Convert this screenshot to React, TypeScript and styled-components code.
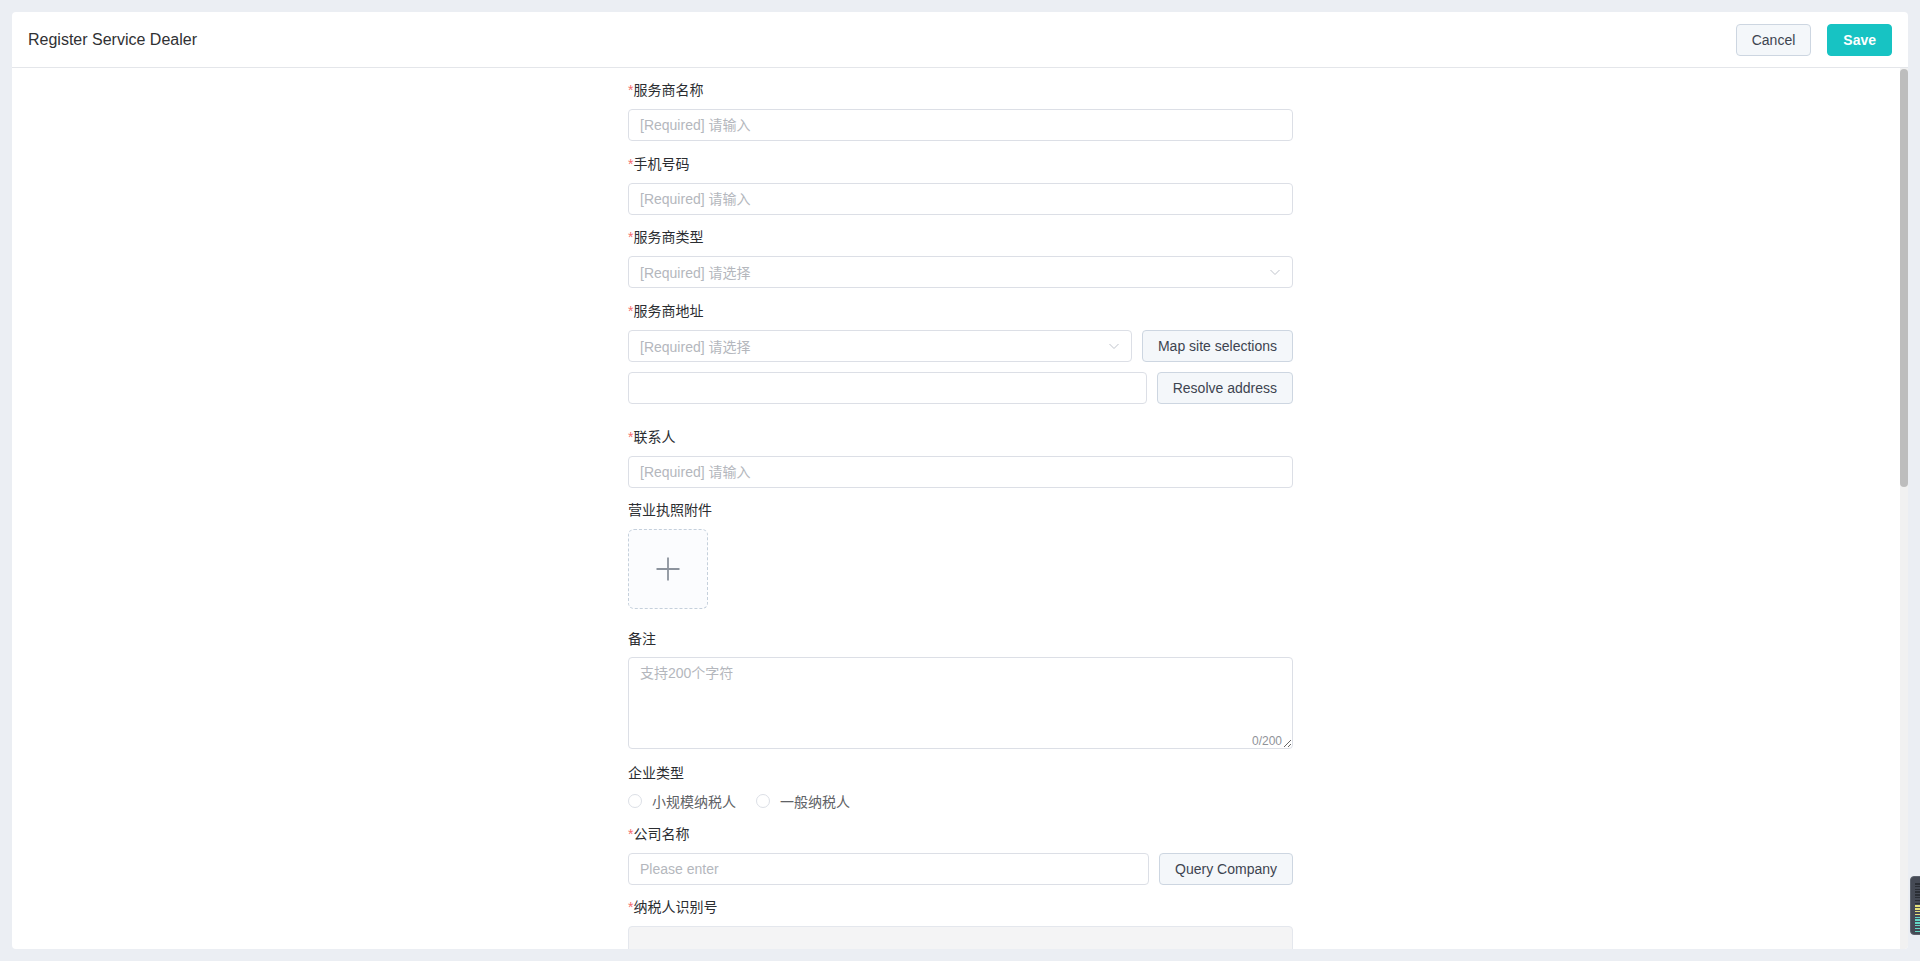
import React from "react";
import styled, { createGlobalStyle } from "styled-components";

const GlobalStyle = createGlobalStyle`
    html, body {
        margin: 0;
        padding: 0;
        background: #ebeef3;
        font-family: "Liberation Sans", Arial, "Noto Sans CJK SC", sans-serif;
        color: #303133;
    }
    * {
        box-sizing: border-box;
    }
`;

const Page = styled.div`
    height: 100vh;
    padding: 12px;
    display: flex;
`;

const Card = styled.div`
    flex: 1;
    min-width: 0;
    background: #fff;
    border-radius: 4px;
    display: flex;
    flex-direction: column;
    overflow: hidden;
`;

const Header = styled.div`
    height: 56px;
    flex-shrink: 0;
    padding: 0 16px;
    display: flex;
    align-items: center;
    justify-content: space-between;
    border-bottom: 1px solid #e4e6ea;
`;

const Title = styled.div`
    font-size: 16px;
    color: #303133;
`;

const Actions = styled.div`
    display: flex;
    gap: 16px;
`;

const Button = styled.button<{ $kind?: "primary" | "plain" }>`
    height: 32px;
    padding: 0 15px;
    border-radius: 4px;
    font-family: inherit;
    font-size: 14px;
    white-space: nowrap;
    flex-shrink: 0;
    cursor: pointer;
    border: 1px solid ${(p) => (p.$kind === "primary" ? "#17c3c3" : "#cdd6e1")};
    background: ${(p) => (p.$kind === "primary" ? "#17c3c3" : "#f4f7fa")};
    color: ${(p) => (p.$kind === "primary" ? "#fff" : "#3d4450")};
    font-weight: ${(p) => (p.$kind === "primary" ? 600 : 400)};
`;

const Body = styled.div`
    flex: 1;
    min-height: 0;
    display: flex;
`;

const Content = styled.div`
    flex: 1;
    min-width: 0;
    overflow: hidden;
    padding: 12px 0 0 9px;
`;

const ScrollTrack = styled.div`
    width: 8px;
    flex-shrink: 0;
    background: #f1f1f1;
    padding-top: 1px;
`;

const ScrollThumb = styled.div`
    height: 418px;
    border-radius: 4px;
    background: #bdbdbd;
`;

const Form = styled.div`
    width: 665px;
    margin: 0 auto;
`;

const Item = styled.div<{ $mb?: number }>`
    margin-bottom: ${(p) => (p.$mb ?? 12.5)}px;
`;

const Label = styled.div<{ $mb?: number }>`
    font-size: 14px;
    line-height: 20px;
    height: 20px;
    color: #2b2d31;
    margin-bottom: ${(p) => (p.$mb ?? 9)}px;
`;

const Star = styled.span`
    color: #f56c6c;
`;

const Input = styled.input`
    display: block;
    width: 100%;
    height: 32px;
    padding: 0 11px;
    border: 1px solid #dcdfe6;
    border-radius: 4px;
    background: #fff;
    font-family: inherit;
    font-size: 14px;
    color: #303133;
    outline: none;

    &::placeholder {
        color: #b4b7bd;
    }
    &:disabled {
        background: #f4f4f5;
        border-color: #e4e7ed;
    }
`;

const Select = styled.div`
    flex: 1;
    min-width: 0;
    height: 32px;
    padding: 0 11px;
    border: 1px solid #dcdfe6;
    border-radius: 4px;
    display: flex;
    align-items: center;
    justify-content: space-between;
    font-size: 14px;
    color: #b4b7bd;
`;

const Row = styled.div<{ $mt?: number }>`
    display: flex;
    gap: 10px;
    margin-top: ${(p) => p.$mt ?? 0}px;
`;

const Upload = styled.div`
    width: 80px;
    height: 80px;
    border: 1px dashed #c5d0dc;
    border-radius: 6px;
    background: #fbfcfe;
    display: flex;
    align-items: center;
    justify-content: center;
`;

const TextareaWrap = styled.div`
    position: relative;
`;

const Textarea = styled.textarea`
    display: block;
    width: 100%;
    height: 92px;
    padding: 5px 11px;
    border: 1px solid #dcdfe6;
    border-radius: 4px;
    resize: vertical;
    font-family: inherit;
    font-size: 14px;
    line-height: 20px;
    outline: none;

    &::placeholder {
        color: #b4b7bd;
    }
`;

const Count = styled.span`
    position: absolute;
    right: 11px;
    bottom: 1px;
    font-size: 12px;
    line-height: 14px;
    color: #909399;
    background: #fff;
`;

const RadioGroup = styled.div`
    display: flex;
    align-items: center;
    height: 20px;
    gap: 20px;
`;

const Radio = styled.label`
    display: flex;
    align-items: center;
    gap: 10px;
    font-size: 14px;
    color: #606266;
`;

const Dot = styled.span`
    width: 14px;
    height: 14px;
    border-radius: 50%;
    border: 1px solid #dcdfe6;
    background: #fff;
`;

const Meter = styled.div`
    position: fixed;
    left: 1910px;
    top: 876px;
    width: 16px;
    height: 59px;
    padding: 6px 0 0 4px;
    border-radius: 4px;
    background: #454a55;
    border: 1px solid #5c626d;
    display: flex;
    flex-direction: column;
    gap: 1.3px;
`;

const Bar = styled.span<{ $c: string }>`
    width: 5px;
    height: 1.5px;
    background: ${(p) => p.$c};
`;

const Chevron = () => (
    <svg width="12" height="12" viewBox="0 0 12 12" fill="none">
        <path d="M1.5 4 L6 8.5 L10.5 4" stroke="#c0c4cc" strokeWidth="1" />
    </svg>
);

const Plus = () => (
    <svg width="24" height="24" viewBox="0 0 24 24" fill="none">
        <path d="M12 0.5 V23.5 M0.5 12 H23.5" stroke="#8c939d" strokeWidth="1.8" />
    </svg>
);

const ReqLabel: React.FC<{ text: string; required?: boolean; mb?: number }> = ({ text, required, mb }) => (
    <Label $mb={mb}>
        {required && <Star>*</Star>}
        {text}
    </Label>
);

const meterColors = [
    ...Array(8).fill("#2a2e35"),
    ...Array(4).fill("#e3e07a"),
    ...Array(6).fill("#63d9c6"),
];

export default function App() {
    return (
        <>
            <GlobalStyle />
            <Page>
                <Card>
                    <Header>
                        <Title>Register Service Dealer</Title>
                        <Actions>
                            <Button>Cancel</Button>
                            <Button $kind="primary">Save</Button>
                        </Actions>
                    </Header>
                    <Body>
                        <Content>
                            <Form>
                                <Item>
                                    <ReqLabel required text="服务商名称" />
                                    <Input placeholder="[Required] 请输入" />
                                </Item>
                                <Item>
                                    <ReqLabel required text="手机号码" />
                                    <Input placeholder="[Required] 请输入" />
                                </Item>
                                <Item>
                                    <ReqLabel required text="服务商类型" />
                                    <Row>
                                        <Select>
                                            <span>[Required] 请选择</span>
                                            <Chevron />
                                        </Select>
                                    </Row>
                                </Item>
                                <Item $mb={23}>
                                    <ReqLabel required text="服务商地址" />
                                    <Row>
                                        <Select>
                                            <span>[Required] 请选择</span>
                                            <Chevron />
                                        </Select>
                                        <Button>Map site selections</Button>
                                    </Row>
                                    <Row $mt={10}>
                                        <Input />
                                        <Button>Resolve address</Button>
                                    </Row>
                                </Item>
                                <Item>
                                    <ReqLabel required text="联系人" />
                                    <Input placeholder="[Required] 请输入" />
                                </Item>
                                <Item $mb={19.5}>
                                    <ReqLabel text="营业执照附件" />
                                    <Upload>
                                        <Plus />
                                    </Upload>
                                </Item>
                                <Item $mb={14}>
                                    <ReqLabel text="备注" mb={8} />
                                    <TextareaWrap>
                                        <Textarea placeholder="支持200个字符" />
                                        <Count>0/200</Count>
                                    </TextareaWrap>
                                </Item>
                                <Item $mb={13.5}>
                                    <ReqLabel text="企业类型" mb={8} />
                                    <RadioGroup>
                                        <Radio>
                                            <Dot />
                                            小规模纳税人
                                        </Radio>
                                        <Radio>
                                            <Dot />
                                            一般纳税人
                                        </Radio>
                                    </RadioGroup>
                                </Item>
                                <Item>
                                    <ReqLabel required text="公司名称" mb={8.5} />
                                    <Row>
                                        <Input placeholder="Please enter" />
                                        <Button>Query Company</Button>
                                    </Row>
                                </Item>
                                <Item>
                                    <ReqLabel required text="纳税人识别号" />
                                    <Input disabled />
                                </Item>
                            </Form>
                        </Content>
                        <ScrollTrack>
                            <ScrollThumb />
                        </ScrollTrack>
                    </Body>
                </Card>
            </Page>
            <Meter>
                {meterColors.map((c, i) => (
                    <Bar key={i} $c={c} />
                ))}
            </Meter>
        </>
    );
}
